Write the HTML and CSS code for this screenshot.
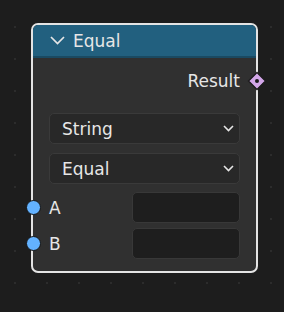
FILE: index.html
```html
<!DOCTYPE html>
<html lang="en">
<head>
    <meta charset="UTF-8">
    <meta name="viewport" content="width=device-width, initial-scale=1.0">
    <title>Equal Node</title>
    <link rel="stylesheet" href="styles.css">
</head>
<body>
    <div class="canvas">
        <div class="node">
            <div class="node-header">
                <svg class="collapse" width="15" height="9" viewBox="0 0 15 9">
                    <polyline points="1,1 7.5,7.5 14,1" fill="none" stroke="#e6e6e6" stroke-width="1.7"/>
                </svg>
                <span>Equal</span>
            </div>
            <div class="node-body">
                <div class="row output">
                    <span>Result</span>
                    <svg class="socket-diamond" width="20" height="20" viewBox="0 0 20 20">
                        <polygon points="10,1.5 18.5,10 10,18.5 1.5,10" fill="#d2a6e8" stroke="#1a1a1a" stroke-width="1.3"/>
                        <circle cx="10" cy="10" r="2" fill="#1a1a1a"/>
                    </svg>
                </div>
                <div class="dropdown first">
                    <span>String</span>
                    <svg width="11" height="7" viewBox="0 0 11 7">
                        <polyline points="1,1 5.5,5.5 10,1" fill="none" stroke="#e6e6e6" stroke-width="1.6"/>
                    </svg>
                </div>
                <div class="dropdown">
                    <span>Equal</span>
                    <svg width="11" height="7" viewBox="0 0 11 7">
                        <polyline points="1,1 5.5,5.5 10,1" fill="none" stroke="#e6e6e6" stroke-width="1.6"/>
                    </svg>
                </div>
                <div class="row input first-input">
                    <span class="socket"></span>
                    <span class="label">A</span>
                    <div class="field"></div>
                </div>
                <div class="row input">
                    <span class="socket"></span>
                    <span class="label">B</span>
                    <div class="field"></div>
                </div>
            </div>
        </div>
    </div>
</body>
</html>
```

FILE: styles.css
```css
body {
    margin: 0;
    padding: 0;
    background-color: #1d1d1d;
    font-family: "DejaVu Sans", sans-serif;
    color: #e6e6e6;
}
.canvas {
    width: 284px;
    height: 312px;
    box-sizing: border-box;
    padding: 23px 0 0 31px;
    background-color: #1d1d1d;
    background-image: radial-gradient(circle, #2c2c2c 1px, transparent 1.5px);
    background-size: 32px 32px;
    background-position: -1px 11px;
}
.node {
    width: 227px;
    height: 250px;
    box-sizing: border-box;
    border: 2px solid #e4e4e4;
    border-radius: 7px;
    background-color: #303030;
}
.node-header {
    height: 31px;
    background-color: #22607f;
    border-bottom: 2px solid #1a4a62;
    border-radius: 5px 5px 0 0;
    display: flex;
    align-items: center;
    padding-left: 17px;
    font-size: 17px;
}
.collapse {
    margin-right: 8px;
}
.node-body {
    padding: 12px 16px 0 16px;
}
.row {
    position: relative;
    display: flex;
    align-items: center;
}
.output {
    height: 22px;
    justify-content: flex-end;
    font-size: 17px;
}
.socket-diamond {
    position: absolute;
    right: -27px;
    top: 1px;
}
.dropdown {
    height: 31px;
    box-sizing: border-box;
    margin-top: 9px;
    border: 1px solid #3a3a3a;
    border-radius: 5px;
    background-color: #282828;
    display: flex;
    align-items: center;
    justify-content: space-between;
    padding: 0 5px 0 12px;
    font-size: 17px;
}
.dropdown.first {
    margin-top: 21px;
}
.input {
    height: 31px;
    margin-top: 5px;
    font-size: 17px;
}
.first-input {
    margin-top: 8px;
}
.socket {
    position: absolute;
    left: -23px;
    top: 8px;
    width: 13px;
    height: 13px;
    border-radius: 50%;
    background-color: #63b2ff;
    border: 1px solid #151515;
}
.label {
    flex: 1;
}
.field {
    width: 108px;
    height: 31px;
    box-sizing: border-box;
    border: 1px solid #383838;
    border-radius: 5px;
    background-color: #1e1e1e;
}
```
